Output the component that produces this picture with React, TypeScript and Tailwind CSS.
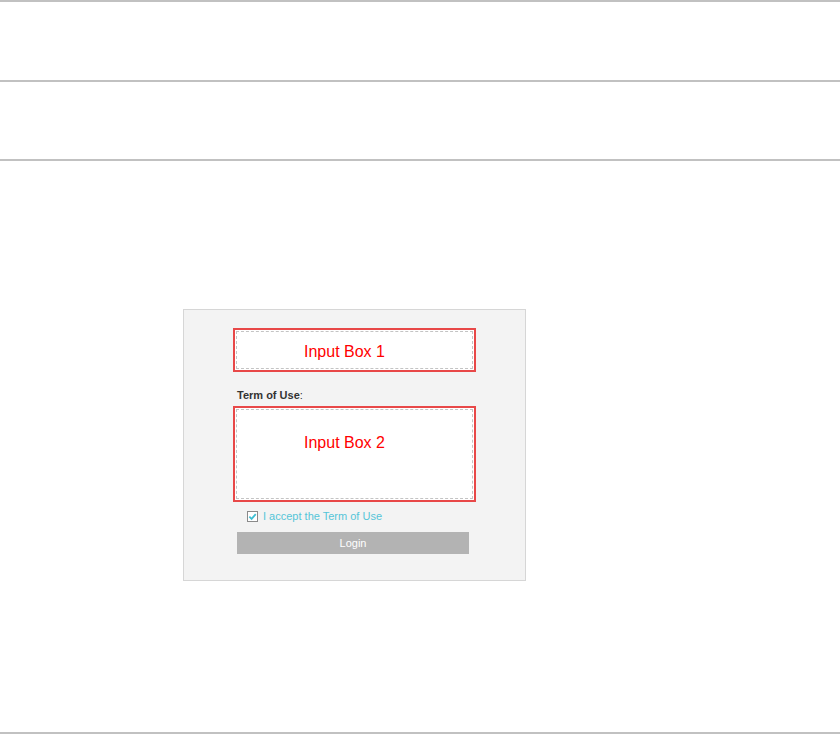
import React from "react";

const Rule: React.FC = () => <div className="h-[2px] w-full bg-[#c1c1c1]" />;

const AnnotatedBox: React.FC<{ label: string; tall?: boolean }> = ({ label, tall }) => (
  <div
    className={`border-2 border-[#e84848] bg-white p-[1px] w-[243px] ${
      tall ? "h-[96px]" : "h-[44px]"
    }`}
  >
    <div
      className={`h-full w-full border border-dashed border-[#c4c4c4] flex justify-center pr-[20px] ${
        tall ? "items-start pt-[24px]" : "items-center pt-[3px]"
      }`}
    >
      <span className="text-[16px] leading-[18px] text-[#ff0000]">{label}</span>
    </div>
  </div>
);

export default function App() {
  return (
    <div
      className="w-[840px] h-[734px] bg-white flex flex-col"
      style={{ fontFamily: '"Liberation Sans", Arial, sans-serif' }}
    >
      <Rule />
      <div className="h-[78px]" />
      <Rule />
      <div className="h-[77px]" />
      <Rule />

      <div className="flex-1">
        <div className="ml-[183px] mt-[148px] w-[343px] h-[272px] border border-[#d6d6d6] bg-[#f3f3f3] pt-[18px] pl-[49px]">
          <AnnotatedBox label="Input Box 1" />

          <div className="mt-[16px] h-[14px] leading-[14px] text-[11px] text-[#333] pl-[4px]">
            <span className="font-bold">Term of Use</span>:
          </div>

          <div className="mt-[4px]">
            <AnnotatedBox label="Input Box 2" tall />
          </div>

          <div className="mt-[4px] h-[20px] flex items-center pl-[14px]">
            <span className="w-[11px] h-[11px] border border-[#8a8a8a] bg-white flex items-center justify-center">
              <svg width="9" height="9" viewBox="0 0 10 10">
                <path d="M1.5 5.2 L4 7.6 L8.6 2.4" fill="none" stroke="#3fbfd4" strokeWidth="2" />
              </svg>
            </span>
            <span className="ml-[5px] text-[11px] text-[#55c5d8]">I accept the Term of Use</span>
          </div>

          <button className="mt-[6px] ml-[4px] w-[232px] h-[22px] bg-[#b3b3b3] text-white text-[11px] flex items-center justify-center">
            Login
          </button>
        </div>
      </div>

      <Rule />
    </div>
  );
}
